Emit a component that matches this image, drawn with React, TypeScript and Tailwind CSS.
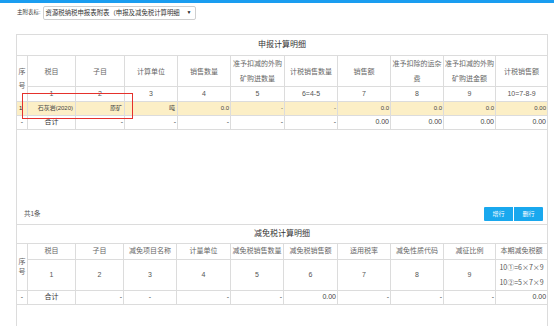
import React from "react";

const font = "font-['Liberation_Sans','Noto_Sans_CJK_SC',sans-serif]";
const cell = "border border-[#dcdcdc] p-0 align-middle font-normal";

const topWidths = [11, 48, 49, 53, 53, 54, 53, 53, 53, 52, 52];
const subWidths = [11, 48, 48, 53, 54, 53, 54, 53, 53, 52, 52];

const topHeaders: React.ReactNode[] = [
  "税目",
  "子目",
  "计算单位",
  "销售数量",
  <>准予扣减的外购<br />矿购进数量</>,
  "计税销售数量",
  "销售额",
  <>准予扣除的运杂<br />费</>,
  <>准予扣减的外购<br />矿购进金额</>,
  "计税销售额",
];
const topNums = ["1", "2", "3", "4", "5", "6=4-5", "7", "8", "9", "10=7-8-9"];
const rowData = ["-", "-", "0.0", "0.0", "0.0", "0.00"];
const totalData = ["-", "-", "-", "-", "-", "0.00", "0.00", "0.00", "0.00"];

const subHeaders = [
  "税目",
  "子目",
  "减免项目名称",
  "计量单位",
  "减免税销售数量",
  "减免税销售额",
  "适用税率",
  "减免性质代码",
  "减征比例",
  "本期减免税额",
];
const subNums = ["1", "2", "3", "4", "5", "6", "7", "8", "9"];

function Cols({ widths }: { widths: number[] }) {
  return (
    <colgroup>
      {widths.map((w, i) => (
        <col key={i} style={{ width: w }} />
      ))}
    </colgroup>
  );
}

export default function App() {
  return (
    <div className={`relative w-[554px] h-[326px] overflow-hidden bg-white ${font}`}>
      <div className="h-[3px] bg-[#1a9df0]" />

      {/* 表单选择 */}
      <div className="flex items-center h-[15px] mt-[2px] pl-[17px]">
        <span className="text-[5.5px] text-[#333] mr-[2px] whitespace-nowrap">主附表标:</span>
        <div className="flex items-center w-[153px] h-[14px] border border-[#cfcfcf] rounded-[2px] bg-white pl-[2px] pr-[3px]">
          <span className="flex-1 whitespace-nowrap text-[6.4px] text-[#333]">
            资源税纳税申报表附表（申报及减免税计算明细
          </span>
          <span className="text-[5px] text-[#222] ml-[1px]">▼</span>
        </div>
      </div>

      {/* 申报计算明细 */}
      <table className="mt-[14px] ml-[16px] w-[532px] table-fixed border-collapse text-[7px] text-[#666]">
        <Cols widths={topWidths} />
        <tbody>
          <tr className="h-[21px]">
            <td colSpan={11} className={`${cell} text-center text-[8px] font-bold text-[#333]`}>
              申报计算明细
            </td>
          </tr>
          <tr className="h-[31px]">
            <td rowSpan={2} className={`${cell} text-center leading-[14px]`}>
              序<br />号
            </td>
            {topHeaders.map((h, i) => (
              <td key={i} className={`${cell} text-center leading-[15px] whitespace-nowrap`}>
                {h}
              </td>
            ))}
          </tr>
          <tr className="h-[15px]">
            {topNums.map((n, i) => (
              <td key={i} className={`${cell} text-center text-[#555]`}>
                {n}
              </td>
            ))}
          </tr>
          <tr className="h-[14px] bg-[#fcefc6] text-[6px] text-[#444]">
            <td className={`${cell} pl-[2px] font-bold text-[#222]`}>1</td>
            <td className={`${cell} text-right pr-[2px]`}>石灰岩(2020)</td>
            <td className={`${cell} text-right pr-[2px]`}>原矿</td>
            <td className={`${cell} text-right pr-[2px]`}>吨</td>
            <td className={`${cell} text-right pr-[1px]`}>0.0</td>
            {rowData.map((v, i) => (
              <td key={i} className={`${cell} text-right pr-[1px]`}>
                {v}
              </td>
            ))}
          </tr>
          <tr className="h-[14px] text-[#444]">
            <td className={`${cell} text-center`}>-</td>
            <td className={`${cell} text-center text-[#333]`}>合计</td>
            {totalData.map((v, i) => (
              <td key={i} className={`${cell} text-right pr-[1px]`}>
                {v}
              </td>
            ))}
          </tr>
        </tbody>
      </table>
      <div className="ml-[16px] w-[532px] h-[94px] border-x border-[#dcdcdc] flex items-end justify-between pb-[3px] pl-[7px] pr-[4px]">
        <span className="text-[6.5px] text-[#555] mb-[2px]">共1条</span>
        <div className="flex gap-[1px]">
          <button className="w-[29px] h-[14px] bg-[#19a8ee] text-white text-[6px] rounded-l-[1px]">增行</button>
          <button className="w-[29px] h-[14px] bg-[#19a8ee] text-white text-[6px] rounded-r-[1px]">删行</button>
        </div>
      </div>

      {/* 减免税计算明细 */}
      <table className="ml-[16px] w-[532px] table-fixed border-collapse text-[7px] text-[#666]">
        <Cols widths={subWidths} />
        <tbody>
          <tr className="h-[19px]">
            <td colSpan={11} className={`${cell} text-center text-[8px] font-bold text-[#333]`}>
              减免税计算明细
            </td>
          </tr>
          <tr className="h-[16px]">
            <td rowSpan={2} className={`${cell} text-center leading-[10px]`}>
              序<br />号
            </td>
            {subHeaders.map((h, i) => (
              <td key={i} className={`${cell} text-center whitespace-nowrap`}>
                {h}
              </td>
            ))}
          </tr>
          <tr className="h-[31px]">
            {subNums.map((n, i) => (
              <td key={i} className={`${cell} text-center text-[#555]`}>
                {n}
              </td>
            ))}
            <td className={`${cell} text-center text-[#555] leading-[15px] font-['Noto_Sans_CJK_SC',sans-serif]`}>
              10①=6×7×9
              <br />
              10②=5×7×9
            </td>
          </tr>
          <tr className="h-[14px] text-[#444]">
            <td className={`${cell} text-center`}>-</td>
            <td className={`${cell} text-center text-[#333]`}>合计</td>
            <td className={`${cell} text-right pr-[1px]`}>-</td>
            <td className={`${cell} text-center`}>-</td>
            <td className={`${cell} text-right pr-[1px]`}>-</td>
            <td className={`${cell} text-right pr-[1px]`}>-</td>
            <td className={`${cell} text-right pr-[1px]`}>0.00</td>
            <td className={`${cell} text-right pr-[1px]`}>-</td>
            <td className={`${cell} text-right pr-[1px]`}>-</td>
            <td className={`${cell} text-right pr-[1px]`}>-</td>
            <td className={`${cell} text-right pr-[1px]`}>0.00</td>
          </tr>
        </tbody>
      </table>
      <div className="ml-[16px] w-[532px] h-[40px] border-x border-[#dcdcdc]" />

      {/* 标注框 */}
      <div className="absolute left-[22px] top-[93px] w-[111px] h-[26px] border-[1.5px] border-[#e5312c] pointer-events-none" />
    </div>
  );
}
